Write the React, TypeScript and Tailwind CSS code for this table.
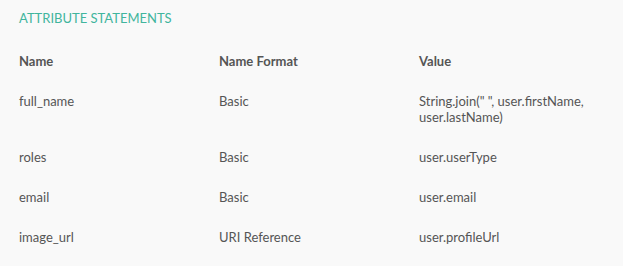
const rows = [
  { name: "full_name", format: "Basic", value: 'String.join(" ", user.firstName, user.lastName)' },
  { name: "roles", format: "Basic", value: "user.userType" },
  { name: "email", format: "Basic", value: "user.email" },
  { name: "image_url", format: "URI Reference", value: "user.profileUrl" },
];

export default function App() {
  return (
    <div className="w-[623px] h-[266px] bg-[#f9f9f9] pl-[19px] pt-2 text-[13px] text-[#555555] font-['Lato','Noto_Sans',sans-serif] overflow-hidden">
      <h2 className="h-5 leading-5 text-[13px] text-[#41b59d] mb-[13px]">ATTRIBUTE STATEMENTS</h2>
      <div className="grid grid-cols-[200px_200px_170px] leading-4">
        <div className="py-3 font-bold">Name</div>
        <div className="py-3 font-bold">Name Format</div>
        <div className="py-3 font-bold">Value</div>
        {rows.map((r) => (
          <>
            <div key={r.name + "n"} className="py-3">{r.name}</div>
            <div key={r.name + "f"} className="py-3">{r.format}</div>
            <div key={r.name + "v"} className="py-3">{r.value}</div>
          </>
        ))}
      </div>
    </div>
  );
}
